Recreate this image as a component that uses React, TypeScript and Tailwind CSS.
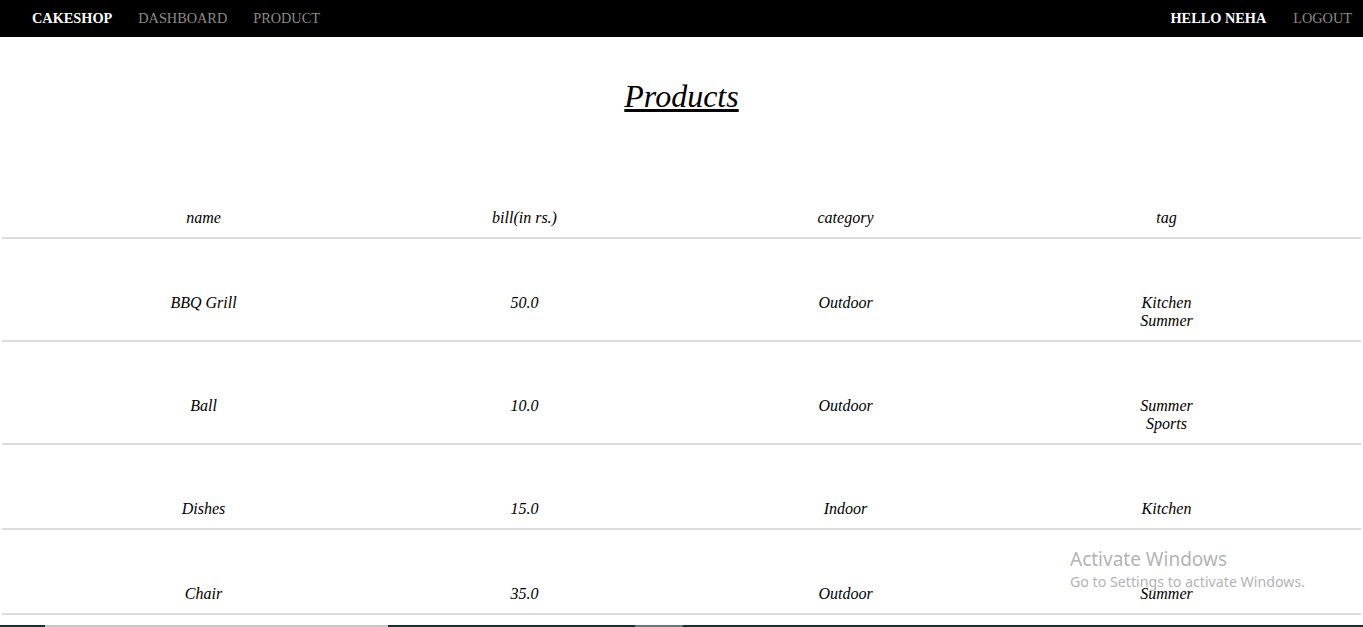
const rows = [
  { name: 'BBQ Grill', bill: '50.0', category: 'Outdoor', tags: ['Kitchen', 'Summer'] },
  { name: 'Ball', bill: '10.0', category: 'Outdoor', tags: ['Summer', 'Sports'] },
  { name: 'Dishes', bill: '15.0', category: 'Indoor', tags: ['Kitchen'] },
  { name: 'Chair', bill: '35.0', category: 'Outdoor', tags: ['Summer'] },
]

const Navbar = () => (
  <nav className="flex h-[37px] shrink-0 items-center justify-between bg-black pl-[32px] pr-[11px] text-[14.3px]">
    <div className="flex items-center gap-[26px]">
      <span className="font-bold text-white">CAKESHOP</span>
      <span className="text-[#8c8c8c]">DASHBOARD</span>
      <span className="text-[#8c8c8c]">PRODUCT</span>
    </div>
    <div className="flex items-center gap-[27px]">
      <span className="font-bold text-white">HELLO NEHA</span>
      <span className="text-[#8c8c8c]">LOGOUT</span>
    </div>
  </nav>
)

const Cell = ({ children }: { children: React.ReactNode }) => (
  <div className="text-center">{children}</div>
)

export default function App() {
  return (
    <div
      className="relative flex h-[627px] flex-col overflow-hidden bg-white text-black"
      style={{ fontFamily: '"Liberation Serif", "Times New Roman", serif' }}
    >
      <Navbar />
      <main className="flex-1 overflow-hidden">
        <h1 className="mt-[40px] text-center text-[32px] italic leading-[38px] underline">
          Products
        </h1>
        <div className="mx-[2px] mt-[94px] text-[16px] italic leading-[18px]">
          <div className="grid grid-cols-[repeat(4,321px)] border-b-2 border-[#dcdcdc] pb-[10px] pl-[41px]">
            <Cell>name</Cell>
            <Cell>bill(in rs.)</Cell>
            <Cell>category</Cell>
            <Cell>tag</Cell>
          </div>
          {rows.map((r) => (
            <div
              key={r.name}
              className="grid grid-cols-[repeat(4,321px)] border-b-2 border-[#dcdcdc] pb-[10px] pl-[41px] pt-[55px]"
            >
              <Cell>{r.name}</Cell>
              <Cell>{r.bill}</Cell>
              <Cell>{r.category}</Cell>
              <Cell>
                {r.tags.map((t) => (
                  <div key={t}>{t}</div>
                ))}
              </Cell>
            </div>
          ))}
        </div>
      </main>
      <div className="flex h-[2px] shrink-0">
        <div className="w-[45px] bg-[#1c2b36]" />
        <div className="w-[343px] bg-[#c8c8c8]" />
        <div className="w-[247px] bg-[#1c2b36]" />
        <div className="w-[48px] bg-[#6e7479]" />
        <div className="flex-1 bg-[#1c2b36]" />
      </div>
      <div
        className="pointer-events-none absolute left-[1070px] top-[546px] text-[#b4b4b4]"
        style={{ fontFamily: '"Noto Sans", "Open Sans", sans-serif' }}
      >
        <div className="text-[19px] leading-[26px]">Activate Windows</div>
        <div className="text-[14.2px] leading-[20px]">Go to Settings to activate Windows.</div>
      </div>
    </div>
  )
}
